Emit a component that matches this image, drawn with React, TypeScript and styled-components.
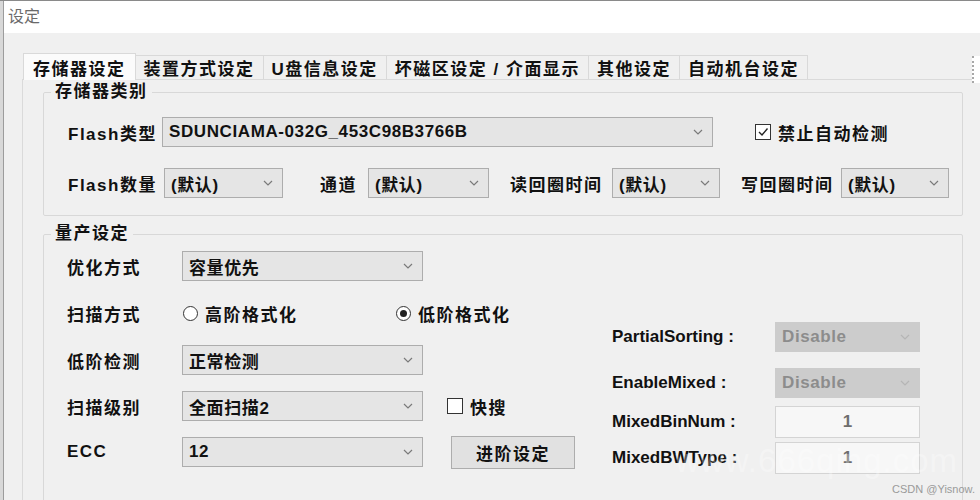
import React from "react";
import styled, { createGlobalStyle } from "styled-components";

const Global = createGlobalStyle`
  html, body { margin: 0; padding: 0; background: #f0f0f0; }
  body { font-family: "Liberation Sans", "Noto Sans CJK SC", sans-serif; color: #111; }
  * { box-sizing: border-box; }
`;

const Window = styled.div`
  position: relative;
  width: 980px;
  height: 500px;
  overflow: hidden;
  background: #d8d8d8;
  border-top: 1px solid #8a8a8a;
  display: flex;
`;

const Frame = styled.div`
  margin-left: 3px;
  flex: 1;
  border-left: 1px solid #9c9c9c;
  background: #f0f0f0;
  display: flex;
  flex-direction: column;
`;

const TitleBar = styled.div`
  height: 32px;
  flex: none;
  background: #ffffff;
  padding-left: 4px;
  line-height: 32px;
  font-size: 16px;
  color: #6a6a6a;
`;

const Body = styled.div`
  flex: 1;
  padding: 20px 0 0 18px;
  display: flex;
  flex-direction: column;
`;

const TabStrip = styled.div`
  position: relative;
  display: flex;
  align-items: flex-end;
  height: 26px;
  padding-left: 1px;
`;

const Tab = styled.div<{ $active?: boolean }>`
  position: relative;
  z-index: ${(p) => (p.$active ? 2 : 1)};
  height: ${(p) => (p.$active ? 27 : 24)}px;
  margin-bottom: ${(p) => (p.$active ? -1 : 0)}px;
  padding: 0 ${(p) => (p.$active ? 9 : 8)}px;
  display: flex;
  align-items: center;
  background: ${(p) => (p.$active ? "#fbfbfb" : "#f0f0f0")};
  border: 1px solid #d9d9d9;
  border-bottom: none;
  border-left: ${(p) => (p.$active ? "1px solid #d9d9d9" : "none")};
  font-size: 17px;
  font-weight: 700;
  letter-spacing: 1.5px;
  white-space: nowrap;
`;

const TabScroller = styled.div`
  position: absolute;
  right: 0;
  top: 3px;
  width: 8px;
  height: 27px;
  background: #ffffff;
  border-left: 2px dotted #a8a8a8;
  z-index: 3;
`;

const TabPanel = styled.div`
  flex: 1;
  border-top: 1px solid #dadada;
  border-left: 1px solid #dadada;
  padding: 2px 0 0 20px;
`;

const Group = styled.fieldset<{ $pad: string }>`
  margin: 0;
  width: 920px;
  padding: ${(p) => p.$pad};
  border: 1px solid #d8d8d8;
  border-radius: 2px;
  & + & { margin-top: 8px; }
`;

const Legend = styled.legend`
  margin-left: 7px;
  padding: 0 4px;
  line-height: 20px;
  font-size: 17px;
  font-weight: 700;
  letter-spacing: 1.5px;
`;

const Stack = styled.div<{ $gap: number }>`
  display: flex;
  flex-direction: column;
  gap: ${(p) => p.$gap}px;
`;

const Content = styled.div<{ $pl: number }>`
  padding-left: ${(p) => p.$pl}px;
`;

const Row = styled.div<{ $h?: number; $mt?: number }>`
  display: flex;
  align-items: center;
  height: ${(p) => p.$h ?? 30}px;
  margin-top: ${(p) => p.$mt ?? 0}px;
`;

const Label = styled.span<{ $w: number; $ml?: number }>`
  flex: none;
  width: ${(p) => p.$w}px;
  margin-left: ${(p) => p.$ml ?? 0}px;
  font-size: 17px;
  font-weight: 700;
  letter-spacing: 1.5px;
  white-space: nowrap;
`;

const EnLabel = styled.span`
  flex: none;
  width: 163px;
  font-size: 17px;
  font-weight: 700;
  white-space: nowrap;
`;

const SelectBox = styled.div<{ $w: number; $disabled?: boolean }>`
  flex: none;
  width: ${(p) => p.$w}px;
  height: 30px;
  display: flex;
  align-items: center;
  justify-content: space-between;
  padding: 0 9px 0 6px;
  background: ${(p) => (p.$disabled ? "#cccccc" : "#e5e5e5")};
  border: 1px solid ${(p) => (p.$disabled ? "#cccccc" : "#adadad")};
  color: ${(p) => (p.$disabled ? "#8c8c8c" : "#111")};
  font-size: 17px;
  font-weight: 700;
  letter-spacing: 0.6px;
  white-space: nowrap;
`;

const TextBox = styled.div`
  flex: none;
  width: 145px;
  height: 32px;
  display: flex;
  align-items: center;
  justify-content: center;
  background: #f7f7f7;
  border: 1px solid #d4d4d4;
  color: #6e6e6e;
  font-size: 17px;
  font-weight: 700;
`;

const Button = styled.div<{ $ml: number }>`
  flex: none;
  margin-left: ${(p) => p.$ml}px;
  width: 124px;
  height: 33px;
  display: flex;
  align-items: center;
  justify-content: center;
  background: #e1e1e1;
  border: 1px solid #adadad;
  font-size: 17px;
  font-weight: 700;
  letter-spacing: 1.5px;
`;

const CheckWrap = styled.span<{ $ml: number }>`
  display: flex;
  align-items: center;
  gap: 7px;
  margin-left: ${(p) => p.$ml}px;
  font-size: 17px;
  font-weight: 700;
  letter-spacing: 1.5px;
  white-space: nowrap;
`;

const Box = styled.span`
  width: 16px;
  height: 16px;
  border: 1px solid #333;
  background: #fff;
  display: flex;
  align-items: center;
  justify-content: center;
`;

const RadioWrap = styled.span<{ $w?: number }>`
  flex: none;
  width: ${(p) => (p.$w ? `${p.$w}px` : "auto")};
  display: flex;
  align-items: center;
  gap: 7px;
  font-size: 17px;
  font-weight: 700;
  letter-spacing: 1.5px;
  white-space: nowrap;
`;

const Circle = styled.span<{ $on?: boolean }>`
  width: 15px;
  height: 15px;
  border-radius: 50%;
  border: 1px solid #333;
  background: #fff;
  display: flex;
  align-items: center;
  justify-content: center;
  &::after {
    content: "";
    width: 7px;
    height: 7px;
    border-radius: 50%;
    background: ${(p) => (p.$on ? "#222" : "transparent")};
  }
`;

const Columns = styled.div`
  display: flex;
  gap: 37px;
`;

const RightCol = styled.div`
  display: flex;
  flex-direction: column;
  padding-top: 71px;
`;

const Watermark = styled.div`
  position: absolute;
  right: 22px;
  top: 440px;
  font-size: 33px;
  line-height: 40px;
  color: rgba(255, 255, 255, 0.3);
  letter-spacing: 1px;
  pointer-events: none;
`;

const Credit = styled.div`
  position: absolute;
  right: 5px;
  bottom: 5px;
  font-size: 11px;
  color: #9a9a9a;
  font-family: "Liberation Sans", sans-serif;
`;

const Chevron = ({ light }: { light?: boolean }) => (
  <svg width="10" height="6" viewBox="0 0 10 6">
    <polyline points="1,1 5,5 9,1" fill="none" stroke={light ? "#b5b5b5" : "#7a7a7a"} strokeWidth="1.2" />
  </svg>
);

const Select = ({ w, value, disabled }: { w: number; value: string; disabled?: boolean }) => (
  <SelectBox $w={w} $disabled={disabled}>
    <span>{value}</span>
    <Chevron light={disabled} />
  </SelectBox>
);

const Check = ({ ml, checked, label }: { ml: number; checked?: boolean; label: string }) => (
  <CheckWrap $ml={ml}>
    <Box>
      {checked && (
        <svg width="12" height="12" viewBox="0 0 12 12">
          <polyline points="2,6 5,9 10.5,2.5" fill="none" stroke="#222" strokeWidth="1.4" />
        </svg>
      )}
    </Box>
    {label}
  </CheckWrap>
);

const tabs = ["存储器设定", "装置方式设定", "U盘信息设定", "坏磁区设定 / 介面显示", "其他设定", "自动机台设定"];

export default function App() {
  return (
    <>
      <Global />
      <Window>
        <Frame>
          <TitleBar>设定</TitleBar>
          <Body>
            <TabStrip>
              {tabs.map((t, i) => (
                <Tab key={t} $active={i === 0}>
                  {t}
                </Tab>
              ))}
              <TabScroller />
            </TabStrip>
            <TabPanel>
              <Group $pad="15px 0 17px 0">
                <Legend>存储器类别</Legend>
                <Content $pl={24}>
                  <Stack $gap={21}>
                    <Row>
                      <Label $w={94}>Flash类型</Label>
                      <Select w={551} value="SDUNCIAMA-032G_453C98B3766B" />
                      <Check ml={42} checked label="禁止自动检测" />
                    </Row>
                    <Row>
                      <Label $w={96}>Flash数量</Label>
                      <Select w={119} value="(默认)" />
                      <Label $w={48} $ml={37}>通道</Label>
                      <Select w={121} value="(默认)" />
                      <Label $w={102} $ml={21}>读回圈时间</Label>
                      <Select w={108} value="(默认)" />
                      <Label $w={100} $ml={21}>写回圈时间</Label>
                      <Select w={108} value="(默认)" />
                    </Row>
                  </Stack>
                </Content>
              </Group>
              <Group $pad="7px 0 40px 0">
                <Legend>量产设定</Legend>
                <Content $pl={23}>
                  <Columns>
                    <Stack $gap={16}>
                      <Row>
                        <Label $w={115}>优化方式</Label>
                        <Select w={241} value="容量优先" />
                      </Row>
                      <Row $h={32}>
                        <Label $w={116}>扫描方式</Label>
                        <RadioWrap $w={213}>
                          <Circle />
                          高阶格式化
                        </RadioWrap>
                        <RadioWrap>
                          <Circle $on />
                          低阶格式化
                        </RadioWrap>
                      </Row>
                      <Row>
                        <Label $w={115}>低阶检测</Label>
                        <Select w={241} value="正常检测" />
                      </Row>
                      <Row>
                        <Label $w={115}>扫描级别</Label>
                        <Select w={241} value="全面扫描2" />
                        <Check ml={24} label="快搜" />
                      </Row>
                      <Row>
                        <Label $w={115}>ECC</Label>
                        <Select w={241} value="12" />
                        <Button $ml={28}>进阶设定</Button>
                      </Row>
                    </Stack>
                    <RightCol>
                      <Row>
                        <EnLabel>PartialSorting :</EnLabel>
                        <Select w={145} value="Disable" disabled />
                      </Row>
                      <Row $mt={16}>
                        <EnLabel>EnableMixed :</EnLabel>
                        <Select w={145} value="Disable" disabled />
                      </Row>
                      <Row $h={32} $mt={8}>
                        <EnLabel>MixedBinNum :</EnLabel>
                        <TextBox>1</TextBox>
                      </Row>
                      <Row $h={32} $mt={4}>
                        <EnLabel>MixedBWType :</EnLabel>
                        <TextBox>1</TextBox>
                      </Row>
                    </RightCol>
                  </Columns>
                </Content>
              </Group>
            </TabPanel>
          </Body>
        </Frame>
        <Watermark>www.666qing.com</Watermark>
        <Credit>CSDN @Yisnow.</Credit>
      </Window>
    </>
  );
}
